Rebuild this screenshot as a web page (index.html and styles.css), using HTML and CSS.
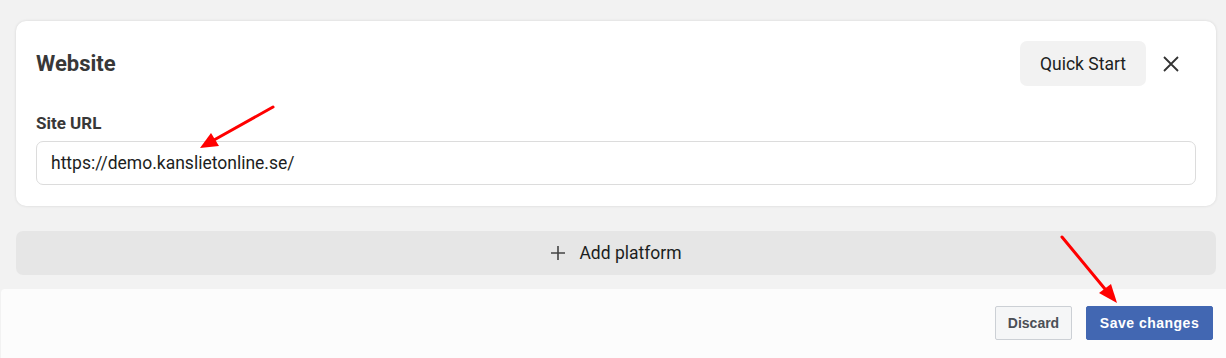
FILE: index.html
```html
<!DOCTYPE html>
<html lang="en">
<head>
  <meta charset="utf-8">
  <title>Website settings</title>
  <link rel="stylesheet" href="styles.css">
</head>
<body>
  <main class="main">
    <section class="card">
      <div class="card__head">
        <h2 class="card__title">Website</h2>
        <button class="btn-quick">Quick Start</button>
        <button class="btn-close" aria-label="Close">
          <svg width="16" height="16" viewBox="0 0 16 16" aria-hidden="true">
            <path d="M1 1L15 15M15 1L1 15" stroke="currentColor" stroke-width="1.8" fill="none"/>
          </svg>
        </button>
      </div>
      <label class="field__label" for="site-url">Site URL</label>
      <input class="field__input" id="site-url" type="text" value="https://demo.kanslietonline.se/">
    </section>

    <button class="add-platform">
      <svg width="16" height="16" viewBox="0 0 16 16" aria-hidden="true">
        <path d="M8 1V15M1 8H15" stroke="currentColor" stroke-width="1.6" fill="none"/>
      </svg>
      Add platform
    </button>
  </main>

  <footer class="footer">
    <button class="btn btn--discard">Discard</button>
    <button class="btn btn--save">Save changes</button>
  </footer>

  <!-- стрелки поверх скриншота -->
  <svg class="arrows" width="1226" height="358" viewBox="0 0 1226 358" aria-hidden="true">
    <g stroke="#f00" stroke-width="3" stroke-linecap="round" fill="none">
      <path d="M273 107L214 140"/>
      <path d="M1062 237L1105 289"/>
    </g>
    <g fill="#f00">
      <path d="M200 148L211 133L219 146Z"/>
      <path d="M1117 303L1099 293L1111 284Z"/>
    </g>
  </svg>
</body>
</html>
```

FILE: styles.css
```css
*, *::before, *::after {
  margin: 0;
  padding: 0;
  box-sizing: border-box;
}

html {
  background: #f2f2f2;
}

body {
  position: relative;
  min-height: 358px;
  margin: 0;
  font-family: "Roboto", "Liberation Sans", sans-serif;
  color: #1c1e21;
  overflow: hidden;
}

button {
  font-family: inherit;
  cursor: pointer;
}

.main {
  padding: 21px 10px 0 16px;
}

.card {
  display: flex;
  flex-direction: column;
  padding: 20px 20px 21px;
  background: #fff;
  border-radius: 10px;
  box-shadow: 0 0 3px rgba(0, 0, 0, 0.12);
}

.card__head {
  display: flex;
  align-items: center;
}

.card__title {
  flex: 1;
  font-size: 22px;
  font-weight: 700;
  color: #383838;
}

.btn-quick {
  height: 45px;
  padding: 0 20px;
  border: none;
  border-radius: 7px;
  background: #f2f2f2;
  font-size: 17.5px;
  color: #1c1e21;
}

.btn-close {
  display: flex;
  align-items: center;
  justify-content: center;
  width: 34px;
  height: 34px;
  margin: 0 8px;
  border: none;
  background: transparent;
  color: #333;
}

.field__label {
  margin-top: 27px;
  font-size: 17px;
  line-height: 20px;
  font-weight: 700;
  color: #383838;
}

.field__input {
  height: 44px;
  margin-top: 8px;
  padding: 0 14px;
  border: 1px solid #dcdcdc;
  border-radius: 7px;
  font-family: inherit;
  font-size: 17.5px;
  color: #1c1e21;
  outline: none;
}

.add-platform {
  display: flex;
  align-items: center;
  justify-content: center;
  gap: 13px;
  width: 100%;
  height: 44px;
  margin-top: 25px;
  border: none;
  border-radius: 7px;
  background: #e6e6e6;
  font-size: 17.5px;
  color: #1c1e21;
}

.add-platform svg {
  color: #444;
}

.footer {
  display: flex;
  justify-content: flex-end;
  gap: 14px;
  height: 69px;
  margin: 14px 0 0 1px;
  padding: 17px 13px 0 0;
  background: #fcfcfc;
  border-top-left-radius: 4px;
}

.btn {
  height: 34px;
  padding: 0;
  border-radius: 2px;
  font-family: "Liberation Sans", Arial, sans-serif;
  font-size: 14px;
  font-weight: 700;
}

.btn--discard {
  width: 77px;
  border: 1px solid #ccd0d5;
  background: #f5f6f7;
  color: #4b4f56;
}

.btn--save {
  width: 127px;
  border: 1px solid #4267b2;
  background: #4267b2;
  color: #fff;
  letter-spacing: 0.5px;
}

.arrows {
  position: absolute;
  top: 0;
  left: 0;
  pointer-events: none;
}
```
